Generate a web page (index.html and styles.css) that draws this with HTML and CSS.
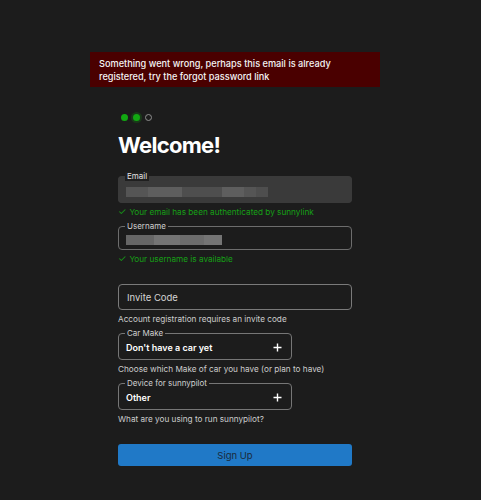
FILE: index.html
```html
<!DOCTYPE html>
<html>
<head>
	<meta charset="utf-8">
	<meta name="viewport" content="width=device-width, initial-scale=1">
	<title>Sign up</title>
	<link rel="stylesheet" href="styles.css">
</head>
<body>
	<div class="page">
		<div class="alert">
			Something went wrong, perhaps this email is already registered, try the forgot password link
		</div>

		<form class="signup">
			<div class="steps">
				<span class="step done"></span>
				<span class="step current"></span>
				<span class="step"></span>
			</div>

			<h1 class="title">Welcome!</h1>

			<fieldset class="field field-filled">
				<legend>Email</legend>
				<div class="blur">
					<span style="width:22px"></span><span style="width:34px"></span><span style="width:40px"></span><span style="width:22px"></span><span style="width:12px"></span><span style="width:12px"></span>
				</div>
			</fieldset>
			<div class="hint ok">Your email has been authenticated by sunnylink</div>

			<fieldset class="field">
				<legend>Username</legend>
				<div class="blur">
					<span style="width:28px"></span><span style="width:26px"></span><span style="width:24px"></span><span style="width:18px"></span>
				</div>
			</fieldset>
			<div class="hint ok">Your username is available</div>

			<div class="field plain">
				<span class="placeholder">Invite Code</span>
			</div>
			<div class="hint">Account registration requires an invite code</div>

			<fieldset class="field select">
				<legend>Car Make</legend>
				<span class="value">Don't have a car yet</span>
				<svg class="plus" width="9" height="9" viewBox="0 0 9 9"><path d="M4.5 0.5v8M0.5 4.5h8" stroke="#fff" stroke-width="1.4" fill="none"/></svg>
			</fieldset>
			<div class="hint">Choose which Make of car you have (or plan to have)</div>

			<fieldset class="field select">
				<legend>Device for sunnypilot</legend>
				<span class="value">Other</span>
				<svg class="plus" width="9" height="9" viewBox="0 0 9 9"><path d="M4.5 0.5v8M0.5 4.5h8" stroke="#fff" stroke-width="1.4" fill="none"/></svg>
			</fieldset>
			<div class="hint">What are you using to run sunnypilot?</div>

			<button class="submit" type="button">Sign Up</button>
		</form>
	</div>
</body>
</html>
```

FILE: styles.css
```css
html, body {
	margin: 0;
	background: #1c1c1c;
	font-family: Inter, "Noto Sans", sans-serif;
	color: #e6e6e6;
}
.page {
	width: 470px;
	padding-top: 52px;
}
.alert {
	width: 272px;
	margin: 0 auto;
	padding: 5px 9px 4px;
	background: #4a0000;
	color: #f4f4f4;
	font-size: 9.2px;
	font-weight: 500;
	line-height: 13px;
}
.signup {
	width: 234px;
	margin: 26px auto 0;
}
.steps {
	display: flex;
	align-items: center;
	gap: 5px;
	height: 8px;
	padding-left: 3px;
}
.step {
	width: 5px;
	height: 5px;
	border-radius: 50%;
	border: 1px solid #8f8f8f;
}
.step.done,
.step.current {
	width: 7px;
	height: 7px;
	border: none;
	background: #12a812;
}
.step.current {
	box-shadow: 0 0 0 2px rgba(18, 168, 18, 0.22);
}
.title {
	margin: 11px 0 14px;
	font-size: 22px;
	font-weight: 700;
	line-height: 26px;
	color: #ffffff;
	letter-spacing: -0.7px;
}
.field {
	margin: 0;
	padding: 4px 7px;
	border: 1px solid #6d6d6d;
	border-radius: 4px;
	display: flex;
	align-items: center;
	box-sizing: border-box;
	min-width: 0;
}
.field legend {
	font-size: 8px;
	line-height: 8px;
	padding: 0 2px;
	margin-left: -1px;
	color: #d0d0d0;
}
.field-filled {
	padding: 5px 7px;
	border-color: #3a3a3a;
	background: #3a3a3a;
}
.field-filled legend {
	line-height: 9px;
	padding: 0 2px;
	background: #1f1f1f;
	color: #e2e2e2;
}
.blur {
	display: flex;
	height: 11px;
	align-items: center;
}
.blur span {
	display: block;
	height: 10px;
	background: #666;
}
.blur span:nth-child(2n) {
	background: #747474;
}
.blur span:nth-child(3n) {
	background: #6c6c6c;
}
.field-filled .blur span {
	background: #555;
}
.field-filled .blur span:nth-child(2n) {
	background: #5e5e5e;
}
.field-filled .blur span:nth-child(3n) {
	background: #4e4e4e;
}
.plain {
	height: 26px;
	margin-top: 20px;
	padding: 0 8px;
	border-color: #7a7a7a;
}
.placeholder {
	font-size: 9.5px;
	color: #d4d4d4;
}
.select {
	width: 174px;
	padding: 5px 7px 6px;
	justify-content: space-between;
	border-color: #767676;
}
.value {
	font-size: 9px;
	line-height: 11px;
	font-weight: 600;
	color: #ffffff;
}
.plus {
	display: block;
	margin-right: 2px;
}
.hint {
	font-size: 8.2px;
	line-height: 10px;
	color: #cccccc;
	margin: 4px 0 5px;
}
.hint.ok {
	color: #16a016;
}
.hint.ok::before {
	content: "\2713";
	font-size: 9.5px;
	margin-right: 3px;
}
.submit {
	display: block;
	width: 234px;
	height: 22px;
	margin-top: 20px;
	border: none;
	border-radius: 3px;
	background: #2079c7;
	color: #1a2a3a;
	font-family: Inter, "Noto Sans", sans-serif;
	font-size: 9.5px;
}
```
